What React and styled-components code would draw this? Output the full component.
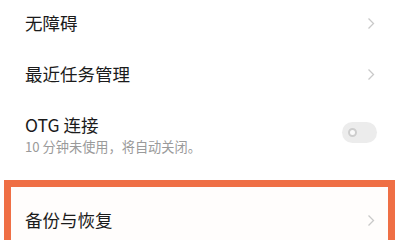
import styled, { createGlobalStyle } from "styled-components";

const Global = createGlobalStyle`
  html, body {
    margin: 0;
    padding: 0;
    background: #ffffff;
  }
  body {
    font-family: "Noto Sans CJK SC", "Noto Sans", sans-serif;
    color: #1b1b1b;
  }
`;

const Chevron = () => (
  <Arrow width="8" height="13" viewBox="0 0 8 13">
    <path d="M1.5 1.5 L6.5 6.5 L1.5 11.5" fill="none" stroke="#c9c9c9" strokeWidth="1.3" />
  </Arrow>
);

const Settings = () => {
  return (
    <Page>
      <Row $h={46}>
        <Title>无障碍</Title>
        <Chevron />
      </Row>
      <Row $h={56}>
        <Title>最近任务管理</Title>
        <Chevron />
      </Row>
      <ToggleRow>
        <div>
          <Title>OTG 连接</Title>
          <Sub>10 分钟未使用，将自动关闭。</Sub>
        </div>
        <Switch>
          <Knob />
        </Switch>
      </ToggleRow>
      <Highlight>
        <Row $h={66} $pad={14}>
          <Title>备份与恢复</Title>
          <Chevron />
        </Row>
      </Highlight>
    </Page>
  );
};

const Page = styled.div`
  width: 400px;
  height: 240px;
  overflow: hidden;
  background: #fff;
`;

const Row = styled.div`
  height: ${(p) => p.$h}px;
  display: flex;
  align-items: center;
  justify-content: space-between;
  padding: 0 ${(p) => (p.$pad != null ? 27 - p.$pad : 25)}px 0 ${(p) => p.$pad ?? 25}px;
`;

const Title = styled.div`
  font-size: 17.5px;
  line-height: 24px;
  color: #1b1b1b;
`;

const Sub = styled.div`
  margin-top: 1px;
  font-size: 13.2px;
  line-height: 18px;
  color: #9a9a9a;
`;

const Arrow = styled.svg`
  display: block;
`;

const ToggleRow = styled.div`
  height: 78px;
  box-sizing: border-box;
  padding: 11px 23px 0 25px;
  display: flex;
  justify-content: space-between;
  align-items: flex-start;
`;

const Switch = styled.div`
  margin-top: 9px;
  width: 35px;
  height: 21px;
  border-radius: 11px;
  background: #ececec;
  display: flex;
  align-items: center;
  padding-left: 6px;
  box-sizing: border-box;
`;

const Knob = styled.div`
  width: 9px;
  height: 9px;
  border-radius: 50%;
  box-sizing: border-box;
  border: 2px solid #cdcdcd;
  background: #fafafa;
`;

const Highlight = styled.div`
  margin-left: 4px;
  width: 391px;
  box-sizing: border-box;
  border: 7px solid #ef6f45;
  background: #fffdfc;
`;

export default function App() {
  return (
    <>
      <Global />
      <Settings />
    </>
  );
}
